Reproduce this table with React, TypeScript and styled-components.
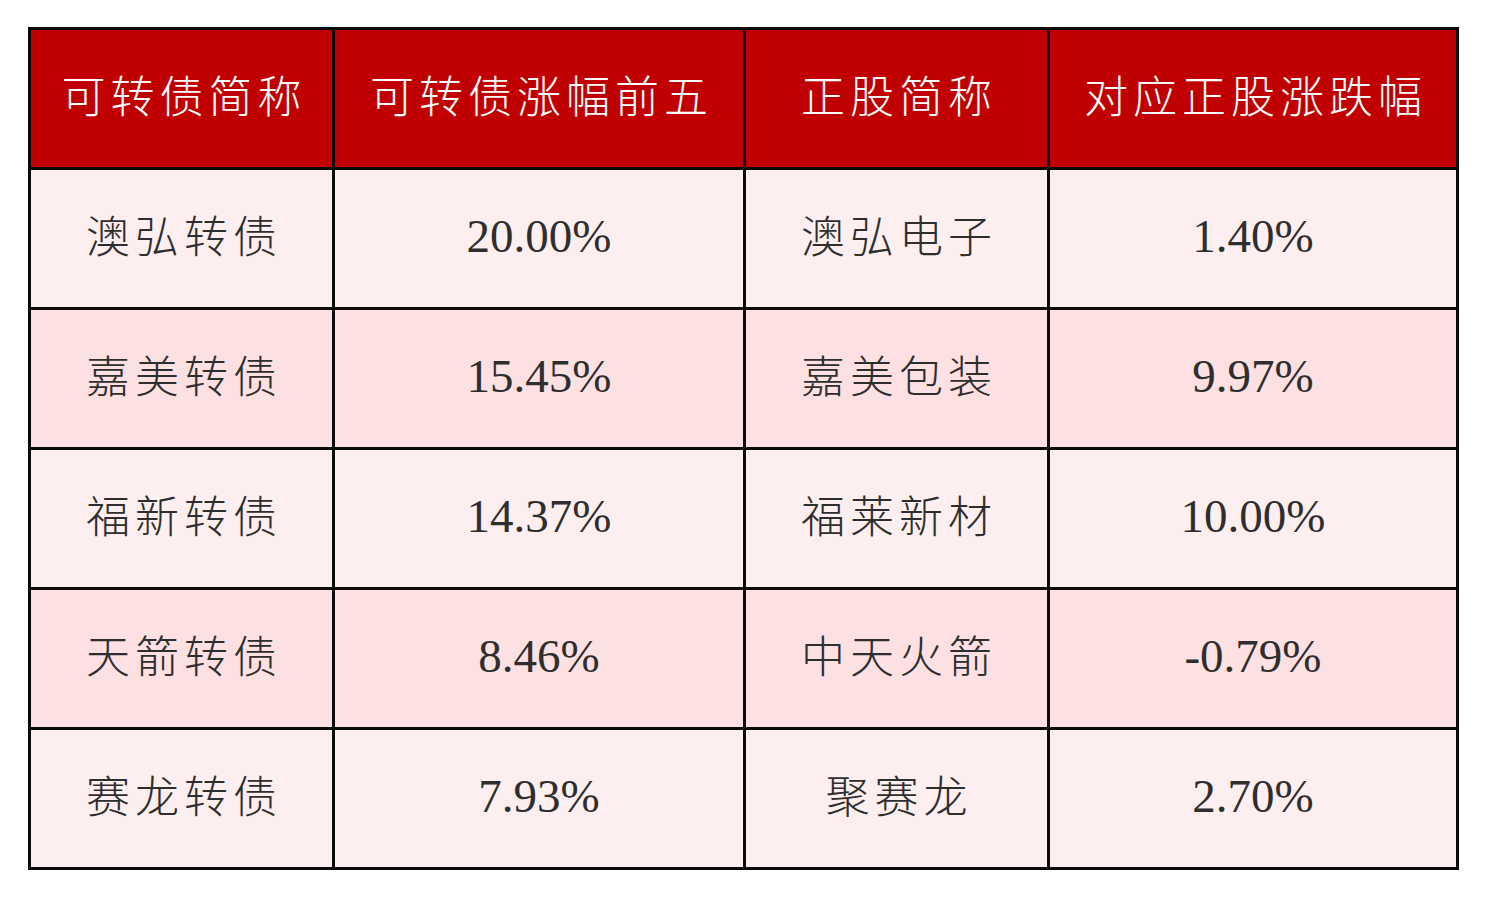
import React from 'react';
import styled, { createGlobalStyle } from 'styled-components';

const GlobalStyle = createGlobalStyle`
  html, body {
    margin: 0;
    padding: 0;
    background: #ffffff;
  }
`;

const Page = styled.div`
  padding: 27px 0 0 28px;
`;

const Table = styled.div`
  display: grid;
  grid-template-columns: 301px 408px 301px 406px;
  grid-auto-rows: 137px;
  gap: 3px;
  padding: 3px;
  width: max-content;
  background: #0a0a0a;
`;

const Cell = styled.div<{ $head?: boolean; $alt?: boolean; $num?: boolean }>`
  display: flex;
  align-items: center;
  justify-content: center;
  padding-bottom: ${(p) => (p.$num ? '6px' : '9px')};
  padding-left: ${(p) => (p.$num ? '0' : '5px')};
  background: ${(p) => (p.$head ? '#c00000' : p.$alt ? '#fde0e2' : '#fdefef')};
  color: ${(p) => (p.$head ? '#ffffff' : '#2e2e2e')};
  font-family: ${(p) =>
    p.$num
      ? '"Liberation Serif", "Noto Sans CJK SC", serif'
      : '"Noto Sans CJK SC", "Liberation Serif", sans-serif'};
  font-size: ${(p) => (p.$num ? '47px' : '44px')};
  font-weight: ${(p) => (p.$num ? 400 : 300)};
  letter-spacing: ${(p) => (p.$num ? '0' : '5px')};
  white-space: nowrap;
`;

const headers = ['可转债简称', '可转债涨幅前五', '正股简称', '对应正股涨跌幅'];

const rows = [
  ['澳弘转债', '20.00%', '澳弘电子', '1.40%'],
  ['嘉美转债', '15.45%', '嘉美包装', '9.97%'],
  ['福新转债', '14.37%', '福莱新材', '10.00%'],
  ['天箭转债', '8.46%', '中天火箭', '-0.79%'],
  ['赛龙转债', '7.93%', '聚赛龙', '2.70%'],
];

const App: React.FC = () => {
  return (
    <>
      <GlobalStyle />
      <Page>
        <Table>
          {headers.map((h) => (
            <Cell key={h} $head>
              {h}
            </Cell>
          ))}
          {rows.map((row, i) =>
            row.map((text, j) => (
              <Cell key={`${i}-${j}`} $alt={i % 2 === 1} $num={j % 2 === 1}>
                {text}
              </Cell>
            ))
          )}
        </Table>
      </Page>
    </>
  );
};

export default App;
